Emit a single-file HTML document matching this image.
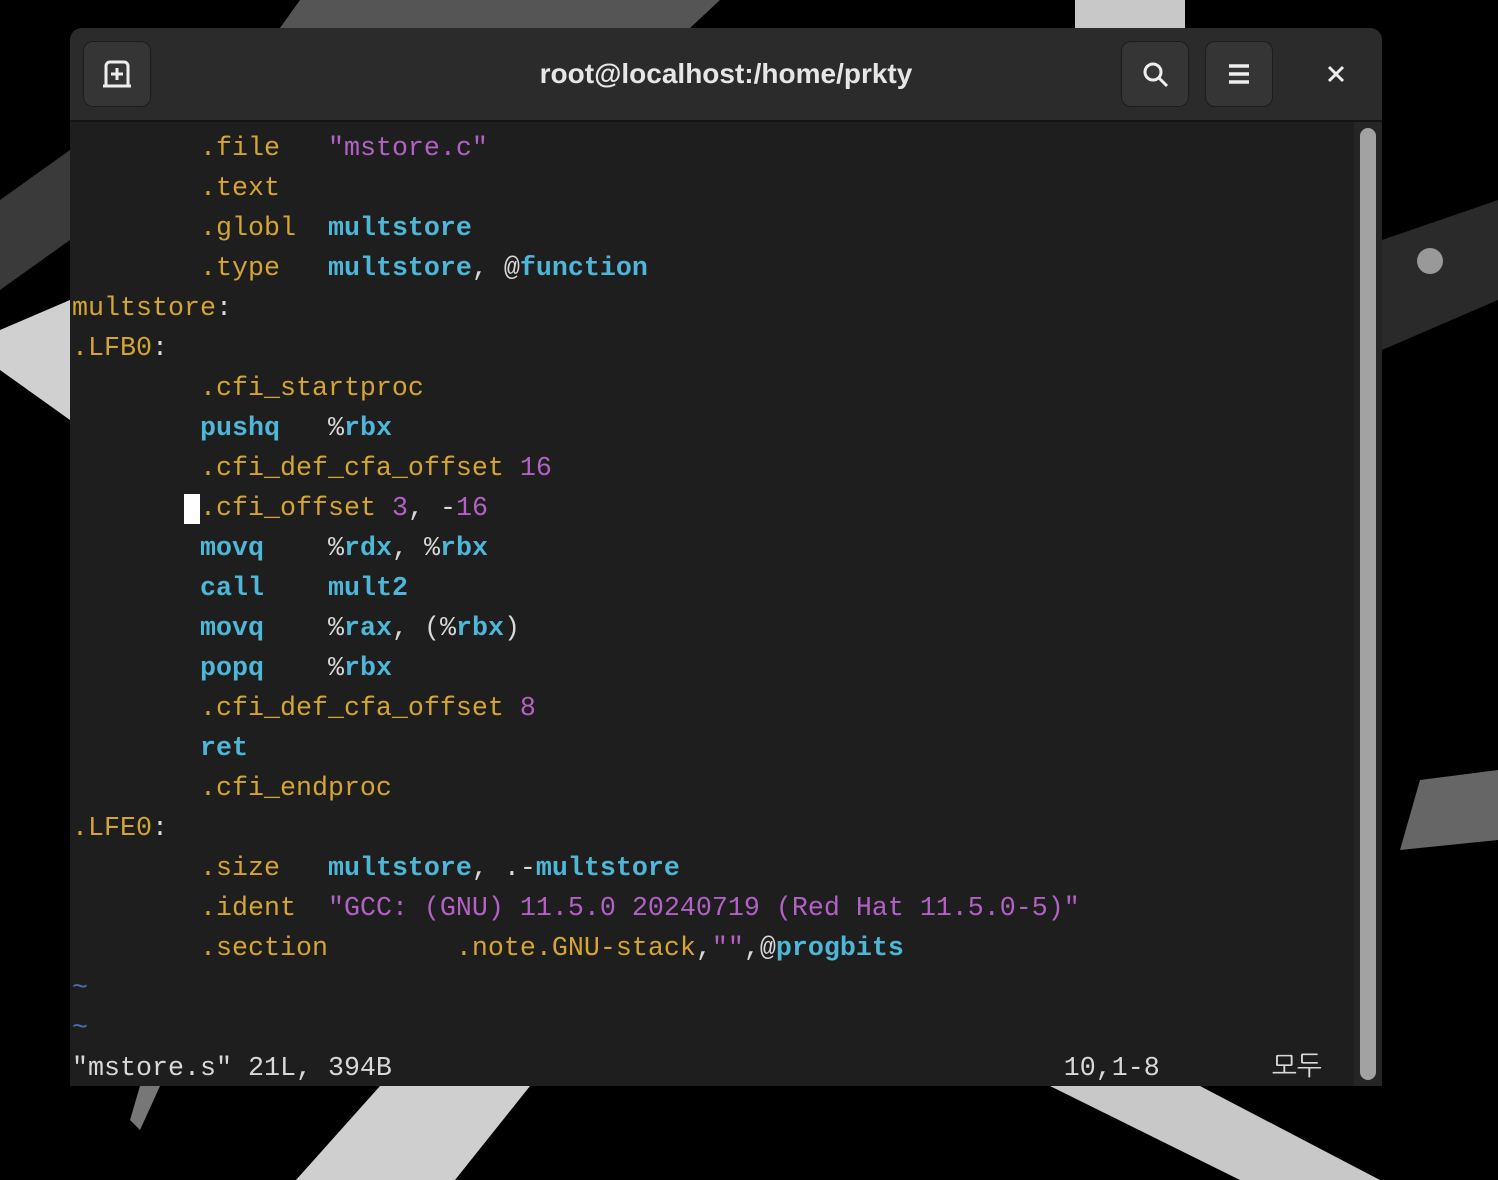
<!DOCTYPE html>
<html><head><meta charset="utf-8"><style>
body{margin:0;width:1498px;height:1180px;background:#000;position:relative;overflow:hidden;font-family:"Liberation Sans",sans-serif}
.win{position:absolute;left:70px;top:28px;width:1312px;height:1058px;background:#1e1e1e;border-radius:12px 12px 0 0;overflow:hidden}
.hdr{position:absolute;left:0;top:0;width:1312px;height:92px;background:#2b2b2b;border-bottom:2px solid #141414}
.btn{position:absolute;top:14px;width:66px;height:64px;background:#353535;border-radius:9px;box-shadow:0 0 0 1px #1c1c1c}
.title{position:absolute;left:0;right:0;top:30px;text-align:center;color:#e6e6e6;font-weight:bold;font-size:28px}
.term{position:absolute;left:2px;top:101px;font-family:"Liberation Mono","NanumGothic",monospace;font-size:26.67px;line-height:40px;white-space:pre;color:#d4a532}
.c{color:#4eb6d6;font-weight:bold}.p{color:#b261c4}.w{color:#d8d8d8}.t{color:#4a6fb0}
.cur{background:#fff;color:#1e1e1e}
.sb{position:absolute;left:1284px;top:94px;width:28px;height:964px;background:#252525}
.th{position:absolute;left:1290px;top:100px;width:16px;height:952px;background:#a2a2a2;border-radius:8px}
</style></head><body>
<svg width="1498" height="1180" style="position:absolute;left:0;top:0">
<polygon points="300,0 720,0 690,28 280,28" fill="#555"/>
<polygon points="1075,0 1185,0 1185,28 1075,28" fill="#c8c8c8"/>
<polygon points="0,200 70,150 70,240 0,290" fill="#3a3a3a"/>
<polygon points="0,330 70,300 70,420 0,370" fill="#d0d0d0"/>
<polygon points="1382,240 1498,200 1498,300 1382,350" fill="#2a2a2a"/>
<circle cx="1430" cy="261" r="13" fill="#999"/>
<polygon points="1420,780 1498,770 1498,840 1400,850" fill="#666"/>
<polygon points="380,1086 530,1086 455,1180 296,1180" fill="#cfcfcf"/>
<polygon points="1050,1086 1200,1086 1380,1180 1240,1180" fill="#c8c8c8"/>
<polygon points="140,1086 160,1086 140,1130 130,1120" fill="#777"/>
</svg>
<div class="win">
<div class="hdr">
<div class="btn" style="left:14px"><svg width="66" height="64"><path d="M22 44 V24 a4 4 0 0 1 4-4 h14 a4 4 0 0 1 4 4 V44 M19 44 H47" stroke="#eee" stroke-width="3" fill="none"/><path d="M33 26 v12 M27 32 h12" stroke="#eee" stroke-width="3"/></svg></div>
<div class="title">root@localhost:/home/prkty</div>
<div class="btn" style="left:1052px"><svg width="66" height="64"><circle cx="31" cy="30" r="8" stroke="#eee" stroke-width="3" fill="none"/><path d="M37 36 L45 44" stroke="#eee" stroke-width="3"/></svg></div>
<div class="btn" style="left:1136px"><svg width="66" height="64"><path d="M23 24 h20 M23 32 h20 M23 40 h20" stroke="#eee" stroke-width="3.5"/></svg></div>
<svg style="position:absolute;left:1254px;top:34px" width="24" height="24"><path d="M5 5 L19 19 M19 5 L5 19" stroke="#eee" stroke-width="3"/></svg>
</div>
<div class="term">        .file   <span class="p">"mstore.c"</span>
        .text
        .globl  <span class="c">multstore</span>
        .type   <span class="c">multstore</span><span class="w">, @</span><span class="c">function</span>
multstore<span class="w">:</span>
.LFB0<span class="w">:</span>
        .cfi_startproc
        <span class="c">pushq</span>   <span class="w">%</span><span class="c">rbx</span>
        .cfi_def_cfa_offset <span class="p">16</span>
       <span class="cur"> </span>.cfi_offset <span class="p">3</span><span class="w">, -</span><span class="p">16</span>
        <span class="c">movq</span>    <span class="w">%</span><span class="c">rdx</span><span class="w">, %</span><span class="c">rbx</span>
        <span class="c">call</span>    <span class="c">mult2</span>
        <span class="c">movq</span>    <span class="w">%</span><span class="c">rax</span><span class="w">, (%</span><span class="c">rbx</span><span class="w">)</span>
        <span class="c">popq</span>    <span class="w">%</span><span class="c">rbx</span>
        .cfi_def_cfa_offset <span class="p">8</span>
        <span class="c">ret</span>
        .cfi_endproc
.LFE0<span class="w">:</span>
        .size   <span class="c">multstore</span><span class="w">, .-</span><span class="c">multstore</span>
        .ident  <span class="p">"GCC: (GNU) 11.5.0 20240719 (Red Hat 11.5.0-5)"</span>
        .section        .note.GNU-stack<span class="w">,</span><span class="p">""</span><span class="w">,@</span><span class="c">progbits</span>
<span class="t">~</span>
<span class="t">~</span>
<span class="w">"mstore.s" 21L, 394B                                          10,1-8       모두</span></div>
<div class="sb"></div><div class="th"></div>
</div>
</body></html>
